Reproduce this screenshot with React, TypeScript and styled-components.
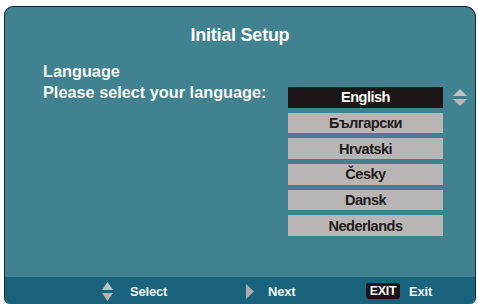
import React from "react";
import styled, { createGlobalStyle } from "styled-components";

const Global = createGlobalStyle`
  html, body { margin: 0; padding: 0; background: #ffffff; }
  body { font-family: "Liberation Sans", Arial, sans-serif; }
`;

const Panel = styled.div`
  margin: 6px 0 0 4px;
  width: 470px;
  height: 297px;
  border: 1px solid #0f2c34;
  border-bottom: none;
  border-radius: 9px 11px 6px 6px;
  background: #40828f;
  display: flex;
  flex-direction: column;
  overflow: hidden;
`;

const Title = styled.div`
  padding-top: 18px;
  font-size: 18px;
  line-height: 20px;
  letter-spacing: -0.25px;
  font-weight: bold;
  color: #ffffff;
  text-align: center;
`;

const Body = styled.div`
  flex: 1;
  padding: 16px 0 0 38px;
  display: flex;
  flex-direction: column;
`;

const Label = styled.div`
  font-size: 16.3px;
  line-height: 21px;
  font-weight: bold;
  color: #f6f9f9;
  white-space: nowrap;
`;

const SelectRow = styled.div`
  display: flex;
  align-items: flex-start;
`;

const LabelCol = styled(Label)`
  width: 245px;
`;

const List = styled.div`
  margin-top: 5px;
  width: 155px;
  display: flex;
  flex-direction: column;
  gap: 5px;
`;

const Item = styled.div<{ $active?: boolean }>`
  height: 20.7px;
  display: flex;
  align-items: center;
  justify-content: center;
  background: ${(p) => (p.$active ? "#1c1616" : "#b9b5b5")};
  color: ${(p) => (p.$active ? "#ffffff" : "#1f1c1c")};
  font-size: 14.6px;
  letter-spacing: -0.55px;
  font-weight: bold;
`;

const Scroll = styled.div`
  margin: 7px 0 0 10px;
  display: flex;
`;

const Footer = styled.div`
  height: 26px;
  background: #1a637d;
  display: flex;
  align-items: center;
  padding: 1px 0 0 97px;
`;

const Hint = styled.div<{ $w?: number; $gap: number }>`
  width: ${(p) => (p.$w ? `${p.$w}px` : "auto")};
  display: flex;
  align-items: center;
  gap: ${(p) => p.$gap}px;
  color: #f0f6f8;
  font-size: 13px;
  letter-spacing: -0.2px;
  font-weight: bold;
`;

const Badge = styled.div`
  width: 34px;
  height: 16px;
  border-radius: 3px;
  background: #1a1414;
  color: #ffffff;
  font-size: 12.4px;
  letter-spacing: -0.2px;
  font-weight: bold;
  display: flex;
  align-items: center;
  justify-content: center;
`;

const UpDown = ({ w, h, top, bottom }: { w: number; h: number; top: string; bottom: string }) => {
  const half = (h - 3) / 2;
  return (
    <svg width={w} height={h} viewBox={`0 0 ${w} ${h}`}>
      <polygon points={`0,${half} ${w / 2},0 ${w},${half}`} fill={top} />
      <polygon points={`0,${h - half} ${w},${h - half} ${w / 2},${h}`} fill={bottom} />
    </svg>
  );
};

const langs = ["English", "Български", "Hrvatski", "Česky", "Dansk", "Nederlands"];

export default function App() {
  return (
    <>
      <Global />
      <Panel>
        <Title>Initial Setup</Title>
        <Body>
          <Label>Language</Label>
          <SelectRow>
            <LabelCol>Please select your language:</LabelCol>
            <List>
              {langs.map((l, i) => (
                <Item key={l} $active={i === 0}>
                  {l}
                </Item>
              ))}
            </List>
            <Scroll>
              <UpDown w={14} h={17} top="#c2c2c4" bottom="#bdb9bb" />
            </Scroll>
          </SelectRow>
        </Body>
        <Footer>
          <Hint $w={144} $gap={17}>
            <UpDown w={11} h={19} top="#bfbfc3" bottom="#c2aeb4" />
            Select
          </Hint>
          <Hint $w={120} $gap={14}>
            <svg width="8" height="15" viewBox="0 0 8 15">
              <polygon points="0,0 8,7.5 0,15" fill="#a9a9b2" />
            </svg>
            Next
          </Hint>
          <Hint $gap={9}>
            <Badge>EXIT</Badge>
            Exit
          </Hint>
        </Footer>
      </Panel>
    </>
  );
}
